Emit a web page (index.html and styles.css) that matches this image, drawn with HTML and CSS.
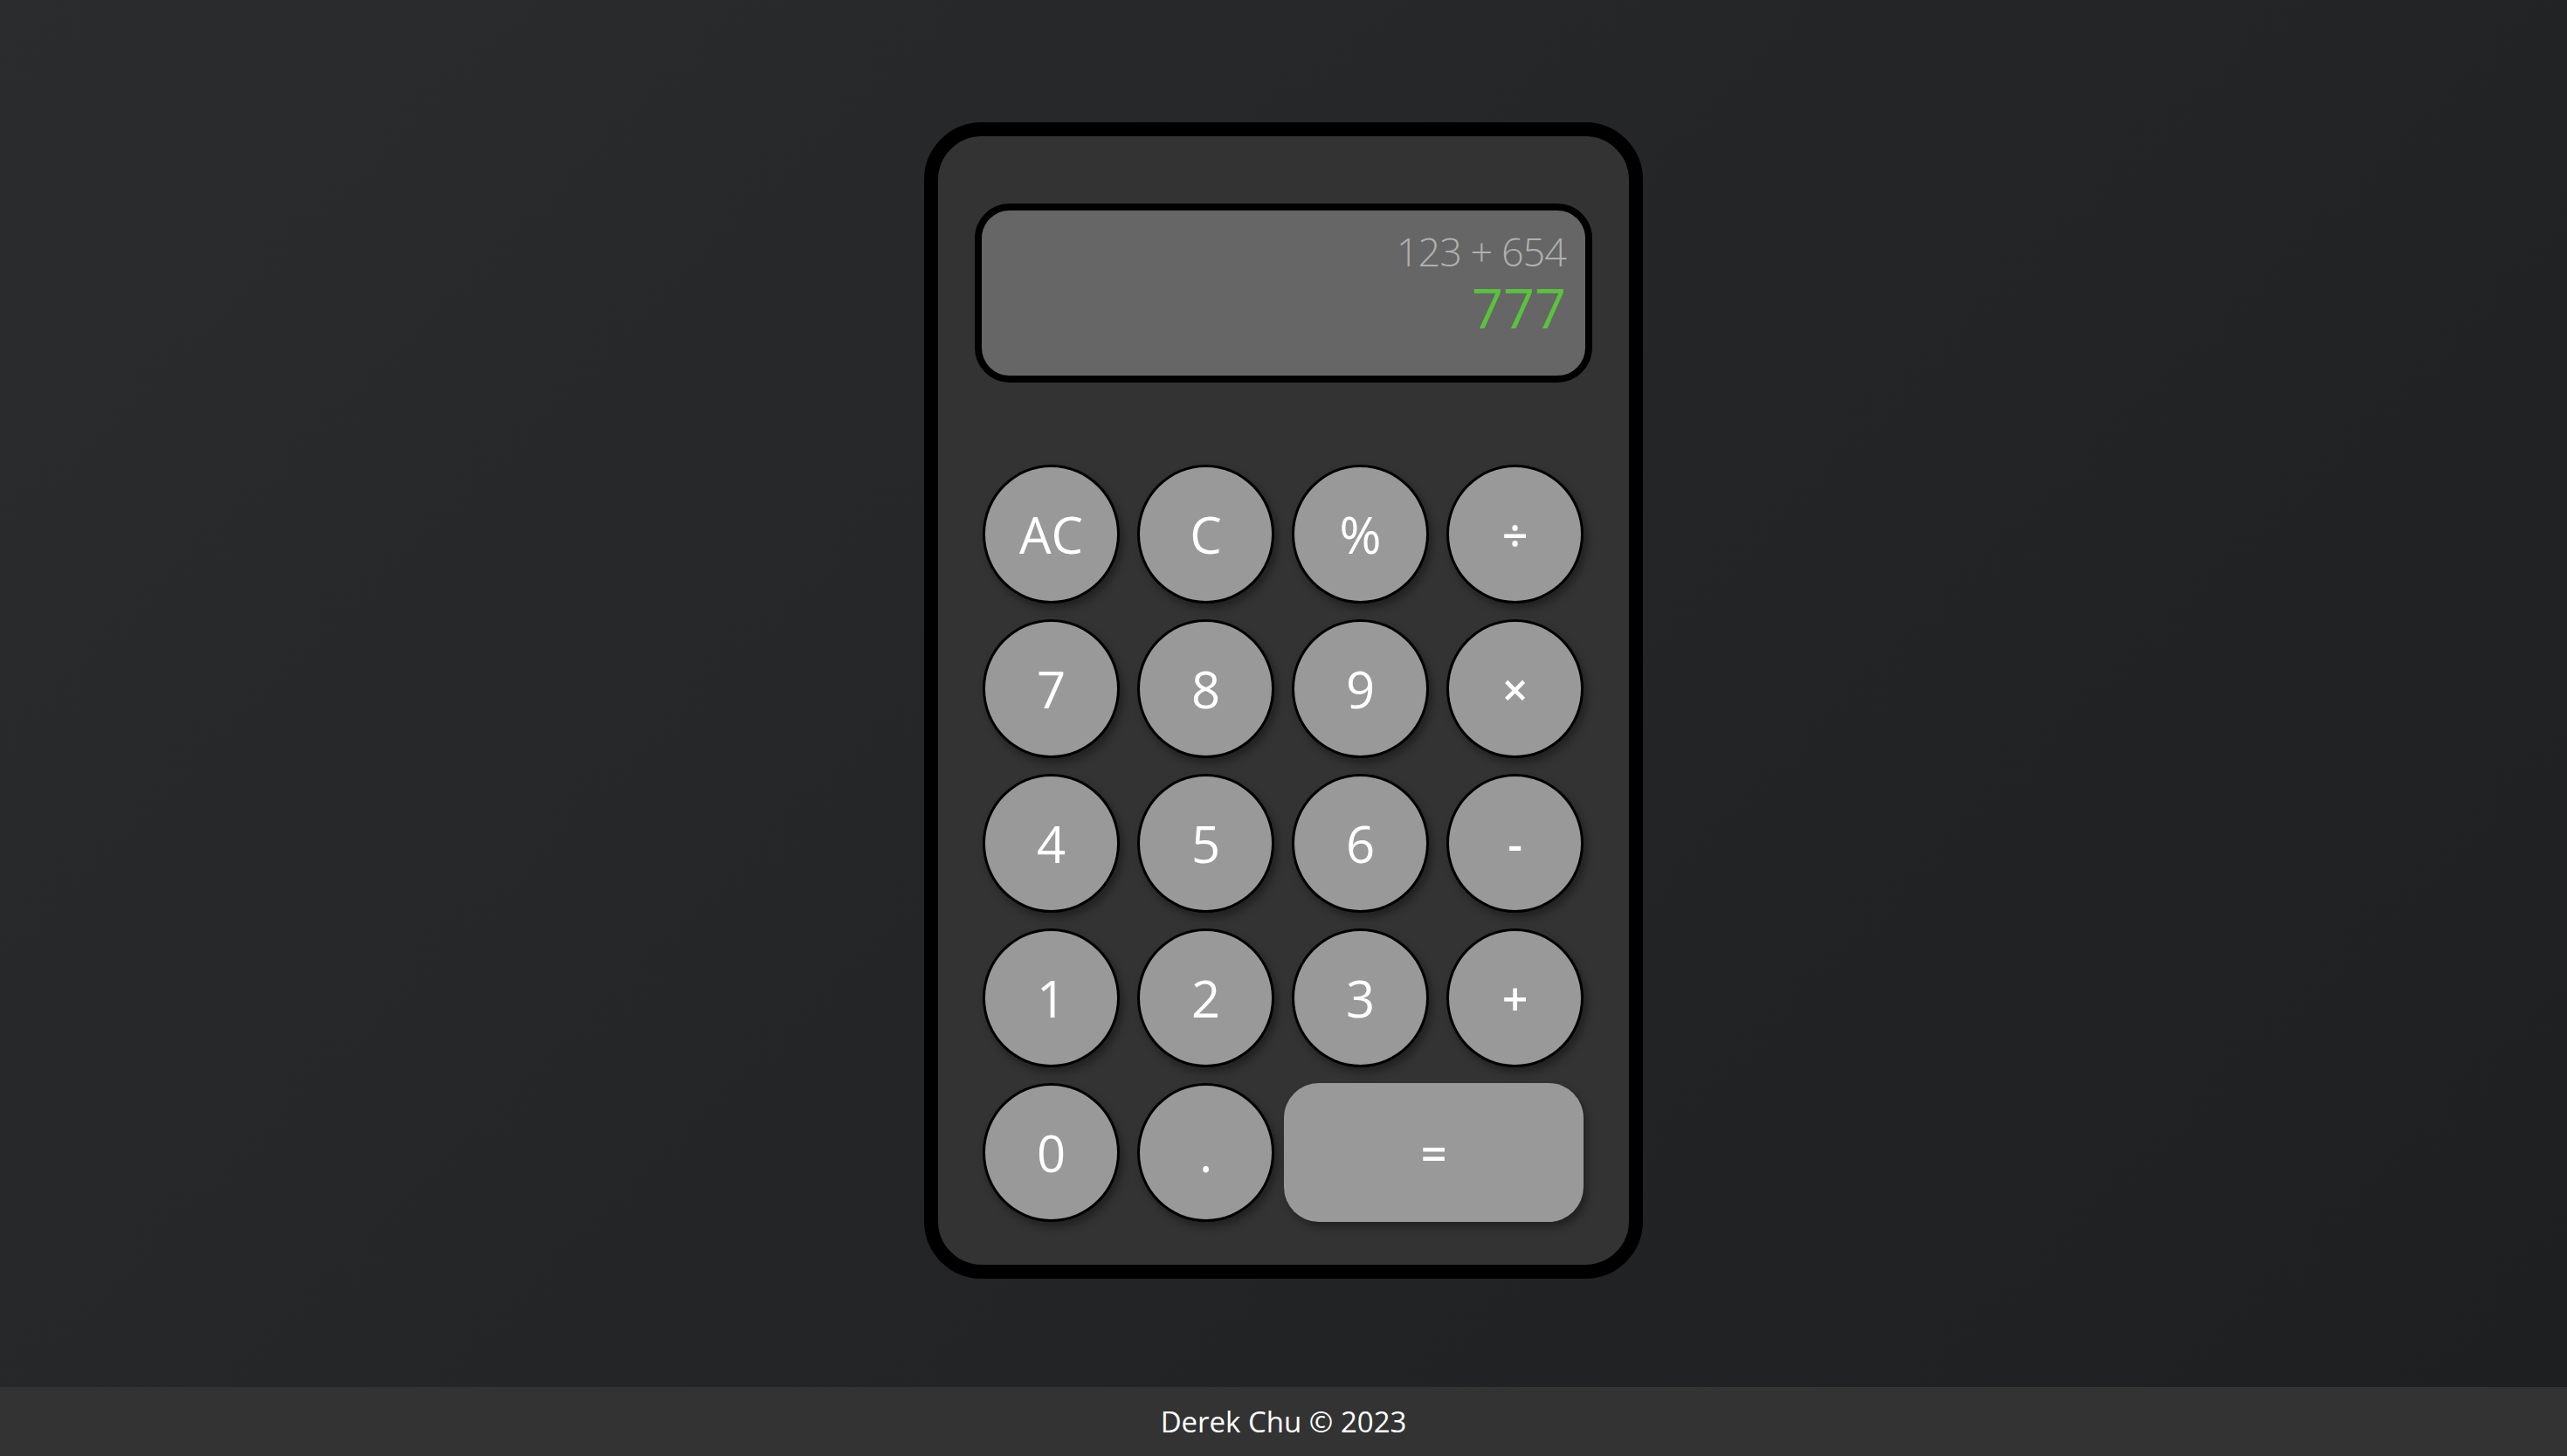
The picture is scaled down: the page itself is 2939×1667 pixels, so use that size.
FILE: index.html
```html
<!DOCTYPE html>
<html lang="en">
<head>
<meta charset="utf-8">
<title>Calculator</title>
<link rel="stylesheet" href="styles.css">
</head>
<body>
<main class="page">
  <div class="calculator">
    <div class="display">
      <div class="expr">123 + 654</div>
      <div class="result">777</div>
    </div>
    <div class="keys">
      <button class="key">AC</button>
      <button class="key">C</button>
      <button class="key">%</button>
      <button class="key op">÷</button>
      <button class="key">7</button>
      <button class="key">8</button>
      <button class="key">9</button>
      <button class="key op">×</button>
      <button class="key">4</button>
      <button class="key">5</button>
      <button class="key">6</button>
      <button class="key op">-</button>
      <button class="key">1</button>
      <button class="key">2</button>
      <button class="key">3</button>
      <button class="key op">+</button>
      <button class="key">0</button>
      <button class="key">.</button>
      <button class="key equals">=</button>
    </div>
  </div>
</main>
<footer class="footer">Derek Chu © 2023</footer>
</body>
</html>
```
FILE: styles.css
```css
* { box-sizing: border-box; }
html, body { margin: 0; padding: 0; }
body {
  font-family: "Open Sans", "Lato", sans-serif;
  background: linear-gradient(135deg, #2b2c2e 0%, #242527 50%, #1e1f21 100%);
  min-height: 1667px;
  color: #fff;
}
.page {
  height: 1588px;
  display: flex;
  align-items: center;
  justify-content: center;
  padding-top: 16px;
}
.calculator {
  width: 823px;
  background: #333;
  border: 16px solid #000;
  border-radius: 66px;
  padding: 77px 42px 49px 42px;
}
.display {
  height: 205px;
  background: #666;
  border: 8px solid #000;
  border-radius: 40px;
  padding: 28px 22px 0 0;
  text-align: right;
  display: flex;
  flex-direction: column;
  align-items: flex-end;
}
.expr {
  font-size: 45px;
  line-height: 38px;
  font-weight: 300;
  color: #b0b0b0;
  letter-spacing: -1px;
}
.result {
  margin-top: 19px;
  font-size: 63px;
  line-height: 52px;
  font-weight: 400;
  color: #5ac33c;
}
.keys {
  margin: 94px 9px 0 9px;
  display: grid;
  grid-template-columns: repeat(4, 157px);
  grid-auto-rows: 159px;
  column-gap: 20px;
  row-gap: 18px;
}
.key {
  font-family: "Open Sans", "Lato", sans-serif;
  font-size: 58px;
  font-weight: 400;
  line-height: 1;
  color: #fff;
  background: #999;
  border: 3px solid #000;
  border-radius: 50%;
  padding: 0;
  display: flex;
  align-items: center;
  justify-content: center;
  box-shadow: 4px 6px 10px rgba(0, 0, 0, 0.35);
}
.key.op { font-size: 52px; font-weight: 600; }
.key.equals {
  grid-column: 3 / span 2;
  margin-left: -9px;
  border: none;
  border-radius: 40px;
  font-size: 52px;
  font-weight: 600;
}
.footer {
  height: 79px;
  background: #333;
  color: #fff;
  display: flex;
  align-items: center;
  justify-content: center;
  font-size: 33px;
}
```
